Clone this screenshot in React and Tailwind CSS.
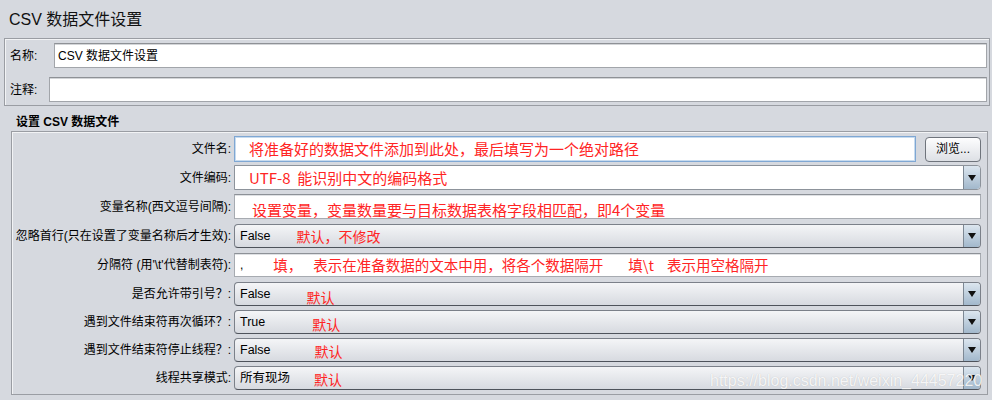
import React from "react";

const LBL = "font-['Liberation_Sans','Noto_Sans_CJK_SC',sans-serif]";
const RED = "font-['Noto_Sans_CJK_SC',sans-serif] text-[#ff2424] leading-[16px]";

function Arrow() {
  return (
    <div className="w-[17px] h-full shrink-0 flex items-center justify-center border-l border-[#7d8894] bg-linear-to-b from-[#dce6ef] to-[#a2b8cc] rounded-r-[3px]">
      <svg width="8" height="6" viewBox="0 0 8 6">
        <path d="M0 0H8L4 6Z" fill="#111" />
      </svg>
    </div>
  );
}

function TextField({ children, focus }) {
  return (
    <div
      className={
        focus
          ? "flex-1 h-full bg-white border border-[#7fa7d3] shadow-[inset_0_0_0_1px_#c7dbef] flex items-center overflow-hidden whitespace-nowrap"
          : "flex-1 h-full bg-white border border-[#a7abb1] border-t-[#8d9197] shadow-[inset_0_1px_0_#dfe1e4] flex items-center overflow-hidden whitespace-nowrap"
      }
    >
      {children}
    </div>
  );
}

function Combo({ children, white }) {
  return (
    <div
      className={
        white
          ? "flex-1 h-full flex bg-white border border-[#8d939b] rounded-r-[4px] overflow-hidden"
          : "flex-1 h-full flex bg-linear-to-b from-[#f4f5f7] to-[#d7dae0] border border-[#7b8089] border-b-[#4e535b] rounded-[4px] overflow-hidden"
      }
    >
      <div className="flex-1 flex items-center whitespace-nowrap">{children}</div>
      <Arrow />
    </div>
  );
}

function Row({ label, h, mt, children }) {
  return (
    <div className={`flex items-center ${h} ${mt}`}>
      <div className={`w-[222px] shrink-0 text-right text-[12px] text-black pr-[3px] whitespace-nowrap ${LBL}`}>{label}</div>
      {children}
    </div>
  );
}

function Val({ children }) {
  return <span className={`text-[12.5px] text-black pl-[5px] ${LBL}`}>{children}</span>;
}

export default function App() {
  return (
    <div className={`w-[992px] h-[400px] bg-[#d6d9df] overflow-hidden relative ${LBL}`}>
      <div className="h-[38px] pl-[9px] pt-[10px] text-[16px] leading-[20px] text-[#111]">CSV 数据文件设置</div>

      <div className="ml-[4px] w-[986px] h-[68px] border border-[#9a9da3] shadow-[inset_1px_1px_0_#f2f3f5] pt-[4px] pr-[2px]">
        <div className="flex items-center h-[25px]">
          <div className="w-[49px] pl-[5px] text-[12px] text-black">名称:</div>
          <div className="flex-1 h-full bg-white border border-[#a2a5aa] border-t-[#8e9196] shadow-[inset_0_1px_0_#d3d5d8] flex items-center pl-[3px] text-[12px] text-black">
            CSV 数据文件设置
          </div>
        </div>
        <div className="flex items-center h-[25px] mt-[9px]">
          <div className="w-[44px] pl-[5px] text-[12px] text-black">注释:</div>
          <div className="flex-1 h-full bg-white border border-[#a2a5aa] border-t-[#8e9196] shadow-[inset_0_1px_0_#d3d5d8]" />
        </div>
      </div>

      <div className="h-[25px] pl-[16px] pt-[8px] text-[12px] leading-[16px] font-bold text-black">设置 CSV 数据文件</div>

      <div className="ml-[11px] w-[977px] h-[264px] border border-[#9a9da3] shadow-[inset_1px_1px_0_#f2f3f5] pt-[4px] pr-[6px]">
        <Row label="文件名:" h="h-[26px]" mt="">
          <TextField focus>
            <span className={`pl-[14px] text-[15px] ${RED}`}>将准备好的数据文件添加到此处，最后填写为一个绝对路径</span>
          </TextField>
          <div className="ml-[9px] w-[56px] h-[25px] rounded-[4px] border border-[#6f747c] bg-linear-to-b from-[#fdfdfe] to-[#dde0e5] flex items-center justify-center text-[12px] text-black">
            浏览...
          </div>
        </Row>

        <Row label="文件编码:" h="h-[25px]" mt="mt-[3px]">
          <Combo white>
            <span className={`pl-[14px] text-[15px] ${RED}`}>UTF-8&nbsp;&nbsp;能识别中文的编码格式</span>
          </Combo>
        </Row>

        <Row label="变量名称(西文逗号间隔):" h="h-[25px]" mt="mt-[4px]">
          <TextField>
            <span className={`pl-[17px] translate-y-[3px] text-[15px] ${RED}`}>设置变量，变量数量要与目标数据表格字段相匹配，即4个变量</span>
          </TextField>
        </Row>

        <Row label="忽略首行(只在设置了变量名称后才生效):" h="h-[24px]" mt="mt-[5px]">
          <Combo>
            <Val>False</Val>
            <span className={`pl-[26px] text-[14px] ${RED}`}>默认，不修改</span>
          </Combo>
        </Row>

        <Row label="分隔符 (用'\t'代替制表符):" h="h-[24px]" mt="mt-[5px]">
          <TextField>
            <span className={`pl-[5px] text-[12px] text-black`}>,</span>
            <span className={`pl-[30px] text-[14.5px] ${RED}`}>填，</span>
            <span className={`pl-[11px] text-[14.5px] ${RED}`}>表示在准备数据的文本中用，将各个数据隔开</span>
            <span className={`pl-[25px] text-[14.5px] ${RED}`}>填\t</span>
            <span className={`pl-[13px] text-[14.5px] ${RED}`}>表示用空格隔开</span>
          </TextField>
        </Row>

        <Row label="是否允许带引号？:" h="h-[24px]" mt="mt-[5px]">
          <Combo>
            <Val>False</Val>
            <span className={`pl-[36px] translate-y-[3px] text-[14px] ${RED}`}>默认</span>
          </Combo>
        </Row>

        <Row label="遇到文件结束符再次循环？:" h="h-[24px]" mt="mt-[4px]">
          <Combo>
            <Val>True</Val>
            <span className={`pl-[47px] translate-y-[2px] text-[14px] ${RED}`}>默认</span>
          </Combo>
        </Row>

        <Row label="遇到文件结束符停止线程？:" h="h-[24px]" mt="mt-[4px]">
          <Combo>
            <Val>False</Val>
            <span className={`pl-[44px] translate-y-[1px] text-[14px] ${RED}`}>默认</span>
          </Combo>
        </Row>

        <Row label="线程共享模式:" h="h-[24px]" mt="mt-[4px]">
          <Combo>
            <Val>所有现场</Val>
            <span className={`pl-[24px] translate-y-[1px] text-[14px] ${RED}`}>默认</span>
          </Combo>
        </Row>
      </div>

      <div className="absolute left-[710px] top-[369px] text-[16px] text-white/85 whitespace-nowrap font-['Liberation_Sans',sans-serif] [text-shadow:0_0_1px_rgba(0,0,0,0.2)]">
        https://blog.csdn.net/weixin_44457220
      </div>
    </div>
  );
}
